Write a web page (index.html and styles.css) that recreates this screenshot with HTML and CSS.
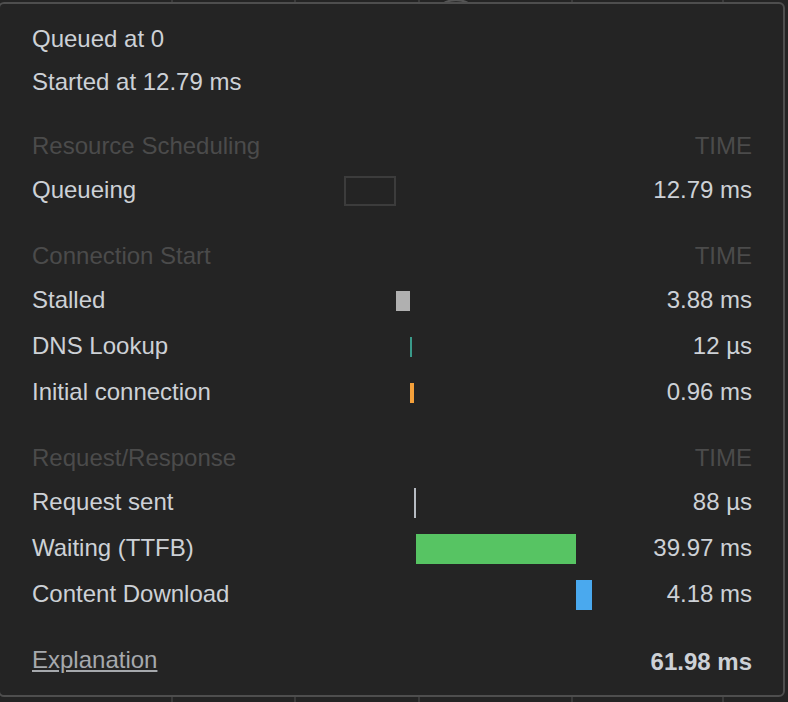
FILE: index.html
```html
<!DOCTYPE html>
<html>
<head>
<meta charset="utf-8">
<link rel="stylesheet" href="styles.css">
</head>
<body>
<div class="hump"></div>
<div class="popover">
  <div class="info">
    <div class="info-row">Queued at 0</div>
    <div class="info-row">Started at 12.79 ms</div>
  </div>

  <section class="section">
    <div class="row head"><span>Resource Scheduling</span><span></span><span class="val">TIME</span></div>
    <div class="row"><span>Queueing</span><div class="track"><div class="bar queue" style="margin-left:0;width:52px"></div></div><span class="val">12.79 ms</span></div>
  </section>

  <section class="section">
    <div class="row head"><span>Connection Start</span><span></span><span class="val">TIME</span></div>
    <div class="row"><span>Stalled</span><div class="track"><div class="bar short stalled" style="margin-left:52px;width:14px"></div></div><span class="val">3.88 ms</span></div>
    <div class="row"><span>DNS Lookup</span><div class="track"><div class="bar short dns" style="margin-left:66px;width:2px"></div></div><span class="val">12 µs</span></div>
    <div class="row"><span>Initial connection</span><div class="track"><div class="bar short conn" style="margin-left:66px;width:4px"></div></div><span class="val">0.96 ms</span></div>
  </section>

  <section class="section">
    <div class="row head"><span>Request/Response</span><span></span><span class="val">TIME</span></div>
    <div class="row"><span>Request sent</span><div class="track"><div class="bar sent" style="margin-left:70px;width:2px"></div></div><span class="val">88 µs</span></div>
    <div class="row"><span>Waiting (TTFB)</span><div class="track"><div class="bar wait" style="margin-left:72px;width:160px"></div></div><span class="val">39.97 ms</span></div>
    <div class="row"><span>Content Download</span><div class="track"><div class="bar down" style="margin-left:232px;width:16px"></div></div><span class="val">4.18 ms</span></div>
  </section>

  <div class="footer">
    <a class="explain" href="#">Explanation</a>
    <span class="total">61.98 ms</span>
  </div>
</div>
</body>
</html>
```

FILE: styles.css
```css
html, body {
  margin: 0;
  padding: 0;
}
body {
  width: 788px;
  height: 702px;
  overflow: hidden;
  position: relative;
  font-family: "Liberation Sans", Arial, sans-serif;
  font-size: 24px;
  color: #cdd1d6;
  background-color: #242424;
  background-image:
    linear-gradient(#3a3a3a, #3a3a3a),
    linear-gradient(#3a3a3a, #3a3a3a),
    linear-gradient(#3a3a3a, #3a3a3a),
    linear-gradient(#3a3a3a, #3a3a3a),
    linear-gradient(#3a3a3a, #3a3a3a);
  background-size: 2px 100%;
  background-repeat: no-repeat;
  background-position: 171px 0, 294px 0, 418px 0, 571px 0, 722px 0;
}
.hump {
  position: absolute;
  left: 430px;
  top: -1px;
  width: 48px;
  height: 48px;
  border-radius: 50%;
  border: 2px solid #555;
  background: #2e2e2e;
  z-index: 0;
}
.popover {
  position: relative;
  z-index: 1;
  box-sizing: border-box;
  margin: 2px 0 0 -2px;
  width: 787px;
  height: 695px;
  border: 2px solid #4e4e4e;
  border-radius: 6px;
  background: #242424;
  padding: 13px 31px 0 32px;
}
.info-row {
  height: 43px;
  display: flex;
  align-items: center;
}
.section {
  margin-top: 22px;
}
.row {
  display: grid;
  grid-template-columns: 312px 252px 1fr;
  align-items: center;
  height: 46px;
}
.row.head {
  height: 42px;
  color: #4b4b4b;
}
.val {
  text-align: right;
}
.track {
  display: flex;
  align-items: center;
  height: 100%;
  padding-top: 2px;
  box-sizing: border-box;
}
.bar {
  height: 30px;
  flex: none;
}
.bar.short {
  height: 20px;
}
.queue {
  box-sizing: border-box;
  border: 2px solid #3c3c3c;
}
.stalled { background: #b0b0b0; }
.dns { background: #3a9a8a; }
.conn { background: #f4a03a; }
.sent { background: #b6bbc2; }
.wait { background: #57c463; }
.down { background: #4aa9ee; }

.footer {
  margin-top: 22px;
  height: 42px;
  display: flex;
  align-items: center;
  justify-content: space-between;
}
.explain {
  color: #a6a9ad;
  text-decoration: underline;
}
.total {
  font-weight: bold;
  margin-top: 4px;
}
```
